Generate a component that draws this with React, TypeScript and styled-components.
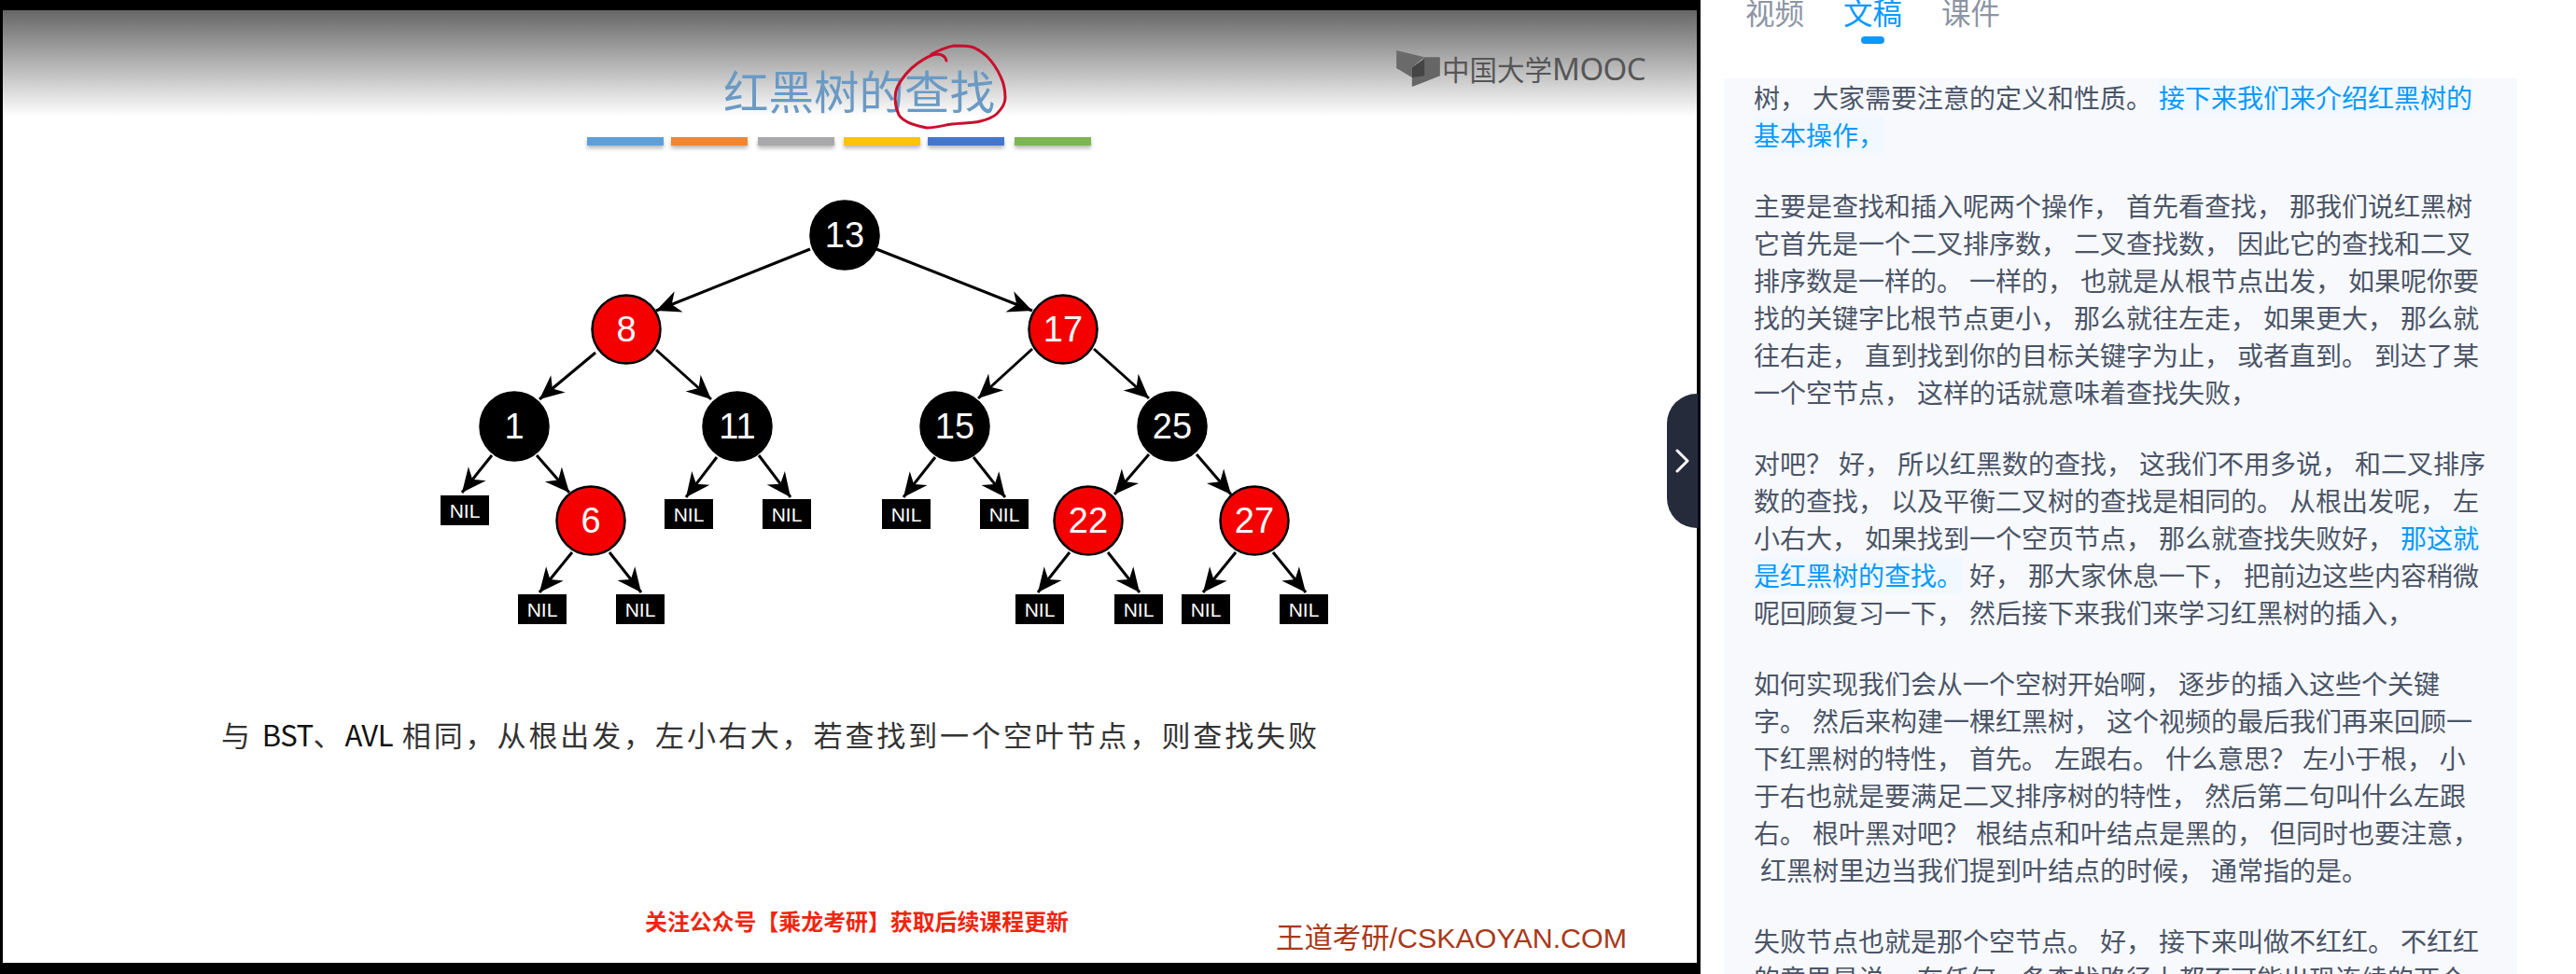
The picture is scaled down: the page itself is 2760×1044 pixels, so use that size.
import React from "react";
import styled, { createGlobalStyle } from "styled-components";

const GlobalStyle = createGlobalStyle`
  html, body {
    margin: 0;
    padding: 0;
    background: #fff;
    overflow: hidden;
  }
  #root {
    width: 2760px;
    height: 1044px;
    overflow: hidden;
  }
`;

const CJK = `"Noto Sans CJK SC", "Noto Sans", sans-serif`;

const Page = styled.div`
  display: flex;
  width: 2760px;
  height: 1044px;
  font-family: ${CJK};
`;

const VideoPane = styled.div`
  position: relative;
  flex: none;
  width: 1822px;
  height: 1044px;
  box-sizing: border-box;
  padding: 11px 4px 12px 3px;
  background: #000;
`;
const Slide = styled.div`
  position: relative;
  height: 100%;
  overflow: hidden;
  background: linear-gradient(#666 0, #fff 114px);
`;
const SlideHeader = styled.div`
  display: flex;
  align-items: flex-start;
  height: 136px;
`;
const SlideTitle = styled.div`
  margin: 55px 0 0 772px;
  font-size: 48.5px;
  line-height: 60px;
  color: #6a9ac4;
  white-space: nowrap;
`;
const Logo = styled.div`
  display: flex;
  align-items: center;
  gap: 2px;
  margin: 43px 55px 0 auto;
  color: #565656;
`;
const LogoText = styled.span`
  font-size: 29.5px;
  line-height: 39px;
  white-space: nowrap;
`;
const LogoLatin = styled.span`
  font-family: "Noto Sans", sans-serif;
  font-size: 33px;
  letter-spacing: -0.6px;
`;
const InkCircle = styled.svg`
  position: absolute;
  left: 947px;
  top: 29px;
`;
const BarRow = styled.div`
  display: flex;
  margin-left: 626px;
`;
const ColorBar = styled.div<{ $color: string; $gap: number }>`
  width: 82px;
  height: 9px;
  margin-right: ${(p) => p.$gap}px;
  background: ${(p) => p.$color};
  box-shadow: 0 3px 4px rgba(0, 0, 0, 0.28);
`;
const TreeSvg = styled.svg`
  display: block;
  margin: 44px 0 0 457px;
`;
const NodeCircle = styled.circle<{ $red?: boolean }>`
  fill: ${(p) => (p.$red ? "#f40000" : "#000")};
  stroke: #000;
  stroke-width: 2.5;
`;
const NodeLabel = styled.text`
  font-family: "Liberation Sans", sans-serif;
  font-size: 38px;
  fill: #fff;
  text-anchor: middle;
  dominant-baseline: central;
`;
const NilBox = styled.rect`
  fill: #000;
`;
const NilLabel = styled.text`
  font-family: "Liberation Sans", sans-serif;
  font-size: 21px;
  fill: #fff;
  text-anchor: middle;
  dominant-baseline: central;
`;
const Caption = styled.div`
  margin: 87px 0 0 234px;
  font-size: 31px;
  line-height: 40px;
  letter-spacing: 2.9px;
  color: #333;
  white-space: nowrap;
`;
const CaptionLatin = styled.span`
  letter-spacing: -0.5px;
  color: #111;
`;
const SlideFooter = styled.div`
  display: flex;
  align-items: flex-start;
  margin-top: 165px;
`;
const Notice = styled.div`
  margin-left: 688px;
  font-size: 23.9px;
  line-height: 30px;
  font-weight: 700;
  color: #f0250f;
  white-space: nowrap;
`;
const Credit = styled.div`
  margin: 15px 75px 0 auto;
  font-family: "Liberation Sans", ${CJK};
  font-size: 30.4px;
  line-height: 36px;
  color: #a8391a;
  white-space: nowrap;
`;
const CollapseHandle = styled.div`
  position: absolute;
  right: 0;
  top: 422px;
  display: flex;
  align-items: center;
  justify-content: center;
  box-sizing: border-box;
  width: 36px;
  height: 144px;
  border-right: 3px solid #070b18;
  border-radius: 32px 0 0 32px;
  background: #252b3b;
`;

const SidePane = styled.div`
  flex: 1;
  min-width: 0;
  display: flex;
  flex-direction: column;
`;
const TabBar = styled.div`
  display: flex;
  gap: 42px;
  height: 92px;
  margin-top: -8px;
  padding-left: 48px;
`;
const Tab = styled.div<{ $active?: boolean }>`
  display: flex;
  flex-direction: column;
  align-items: center;
  font-size: 31.5px;
  line-height: 40px;
  color: ${(p) => (p.$active ? "#0a99ff" : "#8c95a5")};
`;
const TabMark = styled.div`
  width: 25px;
  height: 8px;
  margin-top: 7px;
  border-radius: 4px;
  background: #0a99ff;
`;
const Transcript = styled.div`
  flex: 1;
  min-height: 0;
  overflow: hidden;
  margin: 0 63px 0 25px;
  padding-left: 32px;
  background: #f7f9fd;
`;
const Paragraph = styled.p`
  width: 788px;
  margin: 0 0 36px;
  font-size: 28px;
  line-height: 40px;
  word-spacing: 0.7px;
  color: #4b5567;
`;
const Highlight = styled.span`
  color: #0a99ff;
  background: #f1f8ff;
`;

const bars = [
  { color: "#5f9fd8", gap: 8 },
  { color: "#ef8633", gap: 11 },
  { color: "#a9a9ac", gap: 10 },
  { color: "#ffc30b", gap: 8 },
  { color: "#4477cc", gap: 11 },
  { color: "#7db653", gap: 0 },
];

const nodes = [
  { label: "13", x: 905, y: 252, red: false },
  { label: "8", x: 671, y: 353, red: true },
  { label: "17", x: 1139, y: 353, red: true },
  { label: "1", x: 551, y: 457, red: false },
  { label: "11", x: 790, y: 457, red: false },
  { label: "15", x: 1023, y: 457, red: false },
  { label: "25", x: 1256, y: 457, red: false },
  { label: "6", x: 633, y: 558, red: true },
  { label: "22", x: 1166, y: 558, red: true },
  { label: "27", x: 1344, y: 558, red: true },
];

const nils = [
  [498, 547],
  [738, 551],
  [843, 551],
  [971, 551],
  [1076, 551],
  [581, 653],
  [686, 653],
  [1114, 653],
  [1220, 653],
  [1292, 653],
  [1397, 653],
];

// x1, y1 where the line leaves the parent, x2, y2 the arrow tip
const edges = [
  [868, 267, 703, 333],
  [939, 267, 1106, 333],
  [638, 378, 578, 428],
  [703, 375, 762, 428],
  [1106, 374, 1048, 427],
  [1172, 374, 1231, 427],
  [527, 488, 495, 528],
  [575, 488, 610, 528],
  [768, 490, 735, 533],
  [813, 488, 847, 533],
  [1002, 490, 968, 533],
  [1043, 490, 1077, 533],
  [1231, 487, 1194, 530],
  [1282, 487, 1319, 530],
  [613, 592, 578, 635],
  [653, 592, 687, 635],
  [1146, 592, 1112, 635],
  [1187, 592, 1221, 635],
  [1324, 592, 1289, 635],
  [1364, 592, 1399, 635],
];

const arrowHead = (x1: number, y1: number, x2: number, y2: number) => {
  const len = Math.hypot(x2 - x1, y2 - y1);
  const ux = (x2 - x1) / len;
  const uy = (y2 - y1) / len;
  const px = -uy;
  const py = ux;
  const back = (d: number, side: number) =>
    `${x2 - ux * d + px * side},${y2 - uy * d + py * side}`;
  return [back(0, 0), back(26, 12), back(18, 0), back(26, -12)].join(" ");
};

const Tree = () => (
  <TreeSvg width="980" height="480" viewBox="460 200 980 480">
    {edges.map(([x1, y1, x2, y2]) => (
      <g key={`${x1}-${x2}`}>
        <line x1={x1} y1={y1} x2={x2} y2={y2} stroke="#000" strokeWidth="3" />
        <polygon points={arrowHead(x1, y1, x2, y2)} fill="#000" />
      </g>
    ))}
    {nodes.map((n) => (
      <g key={n.label}>
        <NodeCircle cx={n.x} cy={n.y} r={36.5} $red={n.red} />
        <NodeLabel x={n.x} y={n.y}>
          {n.label}
        </NodeLabel>
      </g>
    ))}
    {nils.map(([x, y]) => (
      <g key={`${x}-${y}`}>
        <NilBox x={x - 26} y={y - 16} width="52" height="32" />
        <NilLabel x={x} y={y}>
          NIL
        </NilLabel>
      </g>
    ))}
  </TreeSvg>
);

const App: React.FC = () => {
  return (
    <Page>
      <GlobalStyle />
      <VideoPane>
        <Slide>
          <SlideHeader>
            <SlideTitle>红黑树的查找</SlideTitle>
            <Logo>
              <svg width="47" height="39" viewBox="0 0 140 117">
                <path d="M0 0 L90 22 L50 55 L50 87 L0 57 Z" fill="#6a6a6a" />
                <path d="M90 22 L140 22 L140 82 L50 117 L50 87 Z" fill="#666" />
                <path d="M50 55 L90 27 L90 82 L50 87 Z" fill="#444" />
              </svg>
              <LogoText>
                中国大学<LogoLatin>MOOC</LogoLatin>
              </LogoText>
            </Logo>
          </SlideHeader>
          <BarRow>
            {bars.map((b) => (
              <ColorBar key={b.color} $color={b.color} $gap={b.gap} />
            ))}
          </BarRow>
          <Tree />
          <Caption>
            与 <CaptionLatin>BST</CaptionLatin>、<CaptionLatin>AVL</CaptionLatin> 相同，从根出发，左小右大，若查找到一个空叶节点，则查找失败
          </Caption>
          <SlideFooter>
            <Notice>关注公众号【乘龙考研】获取后续课程更新</Notice>
            <Credit>王道考研/CSKAOYAN.COM</Credit>
          </SlideFooter>
          <InkCircle width="140" height="105" viewBox="950 40 140 105" fill="none">
            <path
              d="M1014 65 C1013 60 1008 58 1003 58 C996 59 990 63 983 68 C976 73 967 83 962 92 C958 100 958 112 963 123 C967 130 977 134 993 137 C1003 137 1012 134 1020 133 C1032 132 1042 132 1050 130 C1058 128 1064 126 1068 122 C1074 116 1077 110 1077 105 C1077 97 1076 90 1072 82 C1068 73 1064 67 1057 60 C1051 55 1046 51 1040 50 C1034 49 1029 49 1023 49 C1015 50 1008 53 998 58"
              stroke="#c8102e"
              strokeWidth="3"
              strokeLinecap="round"
            />
          </InkCircle>
        </Slide>
        <CollapseHandle>
          <svg width="16" height="26" viewBox="0 0 16 26" fill="none">
            <polyline
              points="2,2 13,13 2,24"
              stroke="#fff"
              strokeWidth="3"
              strokeLinecap="round"
              strokeLinejoin="round"
            />
          </svg>
        </CollapseHandle>
      </VideoPane>
      <SidePane>
        <TabBar>
          <Tab>视频</Tab>
          <Tab $active>
            文稿
            <TabMark />
          </Tab>
          <Tab>课件</Tab>
        </TabBar>
        <Transcript>
          <Paragraph>
            树， 大家需要注意的定义和性质。 <Highlight>接下来我们来介绍红黑树的基本操作，</Highlight>
          </Paragraph>
          <Paragraph>
            主要是查找和插入呢两个操作， 首先看查找， 那我们说红黑树它首先是一个二叉排序数， 二叉查找数， 因此它的查找和二叉排序数是一样的。 一样的， 也就是从根节点出发， 如果呢你要找的关键字比根节点更小， 那么就往左走， 如果更大， 那么就往右走， 直到找到你的目标关键字为止， 或者直到。 到达了某一个空节点， 这样的话就意味着查找失败，
          </Paragraph>
          <Paragraph>
            对吧？ 好， 所以红黑数的查找， 这我们不用多说， 和二叉排序数的查找， 以及平衡二叉树的查找是相同的。 从根出发呢， 左小右大， 如果找到一个空页节点， 那么就查找失败好， <Highlight>那这就是红黑树的查找。</Highlight> 好， 那大家休息一下， 把前边这些内容稍微呢回顾复习一下， 然后接下来我们来学习红黑树的插入，
          </Paragraph>
          <Paragraph>
            如何实现我们会从一个空树开始啊， 逐步的插入这些个关键字。 然后来构建一棵红黑树， 这个视频的最后我们再来回顾一下红黑树的特性， 首先。 左跟右。 什么意思？ 左小于根， 小于右也就是要满足二叉排序树的特性， 然后第二句叫什么左跟右。 根叶黑对吧？ 根结点和叶结点是黑的， 但同时也要注意，
            <br />
            {"\u00a0"}红黑树里边当我们提到叶结点的时候， 通常指的是。
          </Paragraph>
          <Paragraph>
            失败节点也就是那个空节点。 好， 接下来叫做不红红。 不红红的意思是说， 在任何一条查找路径上都不可能出现连续的两个
          </Paragraph>
        </Transcript>
      </SidePane>
    </Page>
  );
};

export default App;
